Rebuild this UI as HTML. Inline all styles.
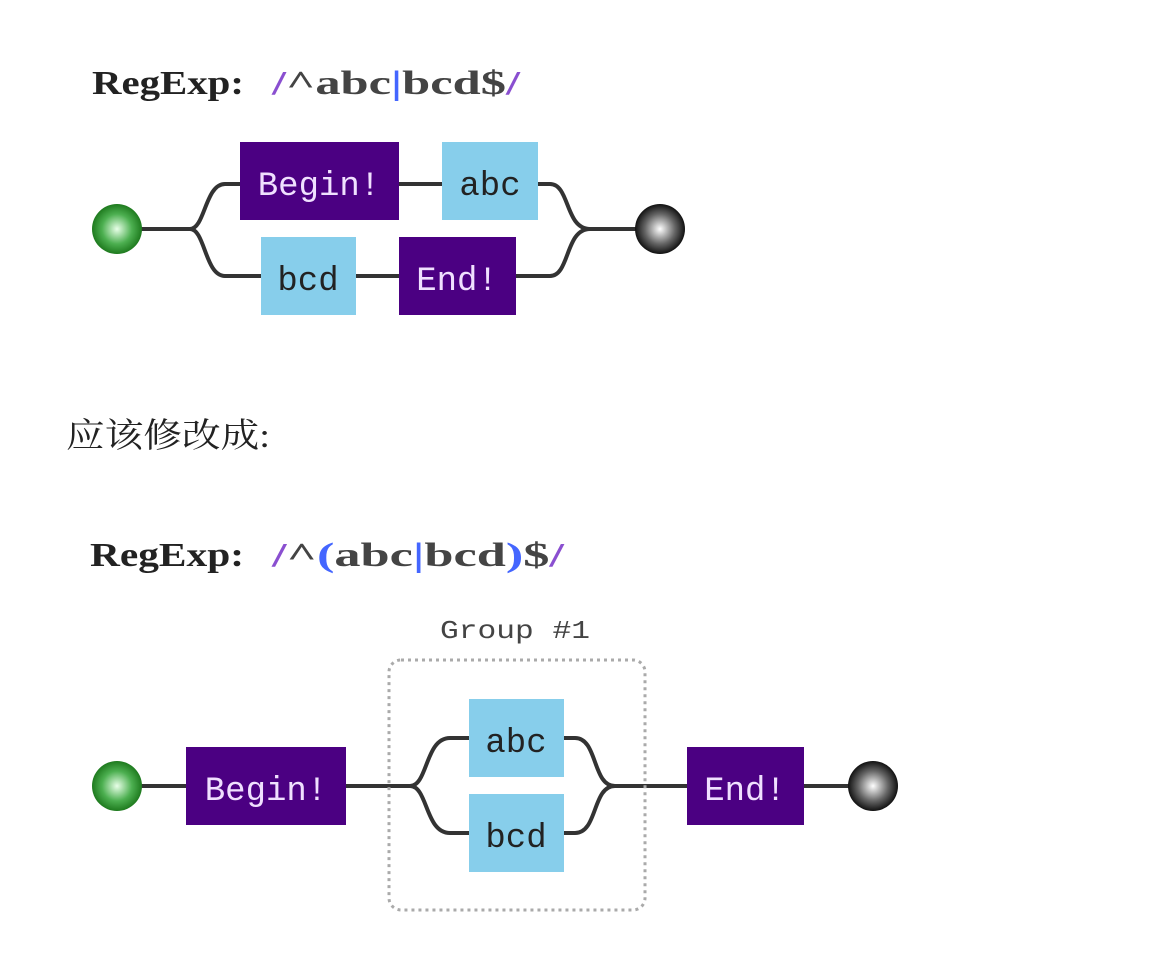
<!DOCTYPE html>
<html><head><meta charset="utf-8"><style>
html,body{margin:0;padding:0;background:#fff;width:1168px;height:974px;overflow:hidden}
</style></head><body>
<svg width="1168" height="974" xmlns="http://www.w3.org/2000/svg">
<defs>
<radialGradient id="g" cx="0.5" cy="0.5" r="0.5"><stop offset="0" stop-color="#e8ffe8"/><stop offset="0.6" stop-color="#4caf50"/><stop offset="1" stop-color="#1e7a1e"/></radialGradient>
<radialGradient id="k" cx="0.5" cy="0.5" r="0.5"><stop offset="0" stop-color="#fff"/><stop offset="0.6" stop-color="#666"/><stop offset="1" stop-color="#111"/></radialGradient>
</defs>
<g font-family="Liberation Serif, serif" font-weight="bold" font-size="34">
<text x="92" y="94" fill="#222" textLength="152" lengthAdjust="spacingAndGlyphs">RegExp:</text>
<text x="272" y="94" textLength="248" lengthAdjust="spacingAndGlyphs"><tspan fill="#8a4fd0">/</tspan><tspan fill="#444">^abc</tspan><tspan fill="#4466ff">|</tspan><tspan fill="#444">bcd$</tspan><tspan fill="#8a4fd0">/</tspan></text>
<text x="90" y="566" fill="#222" textLength="154" lengthAdjust="spacingAndGlyphs">RegExp:</text>
<text x="272" y="566" textLength="292" lengthAdjust="spacingAndGlyphs"><tspan fill="#8a4fd0">/</tspan><tspan fill="#444">^</tspan><tspan fill="#4466ff">(</tspan><tspan fill="#444">abc</tspan><tspan fill="#4466ff">|</tspan><tspan fill="#444">bcd</tspan><tspan fill="#4466ff">)</tspan><tspan fill="#444">$</tspan><tspan fill="#8a4fd0">/</tspan></text>
</g>
<text x="66" y="447" font-family="Liberation Serif, Noto Serif CJK SC, serif" font-size="34" fill="#222" textLength="204" lengthAdjust="spacingAndGlyphs">应该修改成:</text>

<g fill="none" stroke="#333" stroke-width="4">
<path d="M140 229 H190 C205 229 205 184 225 184 H240"/>
<path d="M190 229 C205 229 205 276 225 276 H261"/>
<path d="M399 184 H442"/><path d="M356 276 H399"/>
<path d="M538 184 H550 C570 184 565 229 590 229 H640"/>
<path d="M516 276 H550 C570 276 565 229 590 229"/>
<path d="M140 786 H186"/><path d="M346 786 H410 C428 786 425 738 450 738 H469"/>
<path d="M410 786 C428 786 425 833 450 833 H469"/>
<path d="M564 738 H575 C598 738 592 786 615 786 H687"/>
<path d="M564 833 H575 C598 833 592 786 615 786"/>
<path d="M804 786 H850"/>
</g>
<rect x="389" y="660" width="256" height="250" rx="12" fill="none" stroke="#aaa" stroke-width="3" stroke-dasharray="3,4"/>
<text x="440" y="638" font-family="Liberation Mono, monospace" font-size="26" fill="#444" textLength="150" lengthAdjust="spacingAndGlyphs">Group #1</text>

<g font-family="Liberation Mono, monospace" font-size="34" text-anchor="middle">
<rect x="240" y="142" width="159" height="78" fill="#4b0082"/><text x="319" y="195" fill="#f0e0ff">Begin!</text>
<rect x="442" y="142" width="96" height="78" fill="#87ceeb"/><text x="490" y="195" fill="#222">abc</text>
<rect x="261" y="237" width="95" height="78" fill="#87ceeb"/><text x="308" y="290" fill="#222">bcd</text>
<rect x="399" y="237" width="117" height="78" fill="#4b0082"/><text x="457" y="290" fill="#f0e0ff">End!</text>
<rect x="186" y="747" width="160" height="78" fill="#4b0082"/><text x="266" y="800" fill="#f0e0ff">Begin!</text>
<rect x="469" y="699" width="95" height="78" fill="#87ceeb"/><text x="516" y="752" fill="#222">abc</text>
<rect x="469" y="794" width="95" height="78" fill="#87ceeb"/><text x="516" y="847" fill="#222">bcd</text>
<rect x="687" y="747" width="117" height="78" fill="#4b0082"/><text x="745" y="800" fill="#f0e0ff">End!</text>
</g>
<circle cx="117" cy="229" r="25" fill="url(#g)"/>
<circle cx="660" cy="229" r="25" fill="url(#k)"/>
<circle cx="117" cy="786" r="25" fill="url(#g)"/>
<circle cx="873" cy="786" r="25" fill="url(#k)"/>
</svg>
</body></html>
